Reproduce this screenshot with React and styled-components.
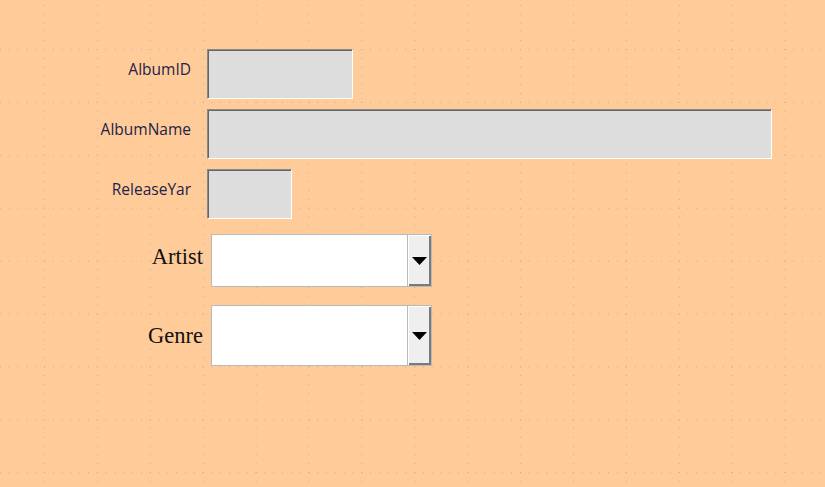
import React from "react";
import styled, { createGlobalStyle } from "styled-components";

const GlobalStyle = createGlobalStyle`
  html, body { margin: 0; padding: 0; }
  body { background: #ffcc99; }
`;

const dot = "#a9b1c2";

const Page = styled.div`
  width: 825px;
  min-height: 487px;
  box-sizing: border-box;
  padding-top: 49px;
  background-color: #ffcc99;
  background-image:
    conic-gradient(from 90deg at 1px 1px, transparent 0 180deg, ${dot} 180deg 270deg, transparent 270deg),
    conic-gradient(from 90deg at 1px 1px, transparent 0 180deg, ${dot} 180deg 270deg, transparent 270deg);
  background-size: 8.82px 52.92px, 52.92px 8.82px;
  background-position: 44px 49px, 44px 49px;
  display: flex;
  flex-direction: column;
`;

const FieldGroup = styled.div`
  display: flex;
  flex-direction: column;
  gap: 10px;
`;

const FieldRow = styled.div`
  display: flex;
  align-items: flex-start;
  gap: 16px;
  height: 50px;
`;

const SmallLabel = styled.label`
  width: 191px;
  flex: none;
  margin-top: 10px;
  text-align: right;
  font-family: "Open Sans", "Noto Sans", sans-serif;
  font-size: 15.5px;
  line-height: 20px;
  color: #22224a;
`;

const TextBox = styled.div`
  width: ${(p) => p.$w}px;
  height: 50px;
  box-sizing: border-box;
  background: #dddddd;
  border-top: 1px solid #8a8a8a;
  border-left: 1px solid #8a8a8a;
  border-right: 1px solid #ffffff;
  border-bottom: 1px solid #ffffff;
  box-shadow: inset 1px 1px 0 #666666;
`;

const ComboGroup = styled.div`
  display: flex;
  flex-direction: column;
  gap: 18px;
  margin-top: 15px;
`;

const ComboRow = styled.div`
  display: flex;
  align-items: flex-start;
  gap: 8px;
  height: ${(p) => p.$h}px;
`;

const BigLabel = styled.label`
  width: 203px;
  flex: none;
  margin-top: ${(p) => p.$top}px;
  text-align: right;
  font-family: "Liberation Serif", "Times New Roman", serif;
  font-size: 22.5px;
  line-height: 24px;
  color: #111111;
`;

const Combo = styled.div`
  width: 221px;
  height: ${(p) => p.$h}px;
  box-sizing: border-box;
  border: 1px solid #b9b9b9;
  background: #ffffff;
  display: flex;
`;

const ComboField = styled.div`
  flex: 1;
`;

const ComboButton = styled.div`
  width: 24px;
  flex: none;
  box-sizing: border-box;
  background: #efefef;
  border-left: 1px solid #b9b9b9;
  box-shadow: inset 1px 1px 0 #ffffff, inset -2px -2px 0 #7a7a7a;
  display: flex;
  align-items: center;
  justify-content: center;
  padding-right: 1px;
`;

const Arrow = () => (
  <svg width="15" height="8" viewBox="0 0 15 8">
    <polygon points="0,0 15,0 7.5,8" fill="#000" />
  </svg>
);

export default function App() {
  return (
    <>
      <GlobalStyle />
      <Page>
        <FieldGroup>
          <FieldRow>
            <SmallLabel>AlbumID</SmallLabel>
            <TextBox $w={146} />
          </FieldRow>
          <FieldRow>
            <SmallLabel>AlbumName</SmallLabel>
            <TextBox $w={565} />
          </FieldRow>
          <FieldRow>
            <SmallLabel>ReleaseYar</SmallLabel>
            <TextBox $w={85} />
          </FieldRow>
        </FieldGroup>
        <ComboGroup>
          <ComboRow $h={53}>
            <BigLabel $top={11}>Artist</BigLabel>
            <Combo $h={53}>
              <ComboField />
              <ComboButton>
                <Arrow />
              </ComboButton>
            </Combo>
          </ComboRow>
          <ComboRow $h={61}>
            <BigLabel $top={19}>Genre</BigLabel>
            <Combo $h={61}>
              <ComboField />
              <ComboButton>
                <Arrow />
              </ComboButton>
            </Combo>
          </ComboRow>
        </ComboGroup>
      </Page>
    </>
  );
}
